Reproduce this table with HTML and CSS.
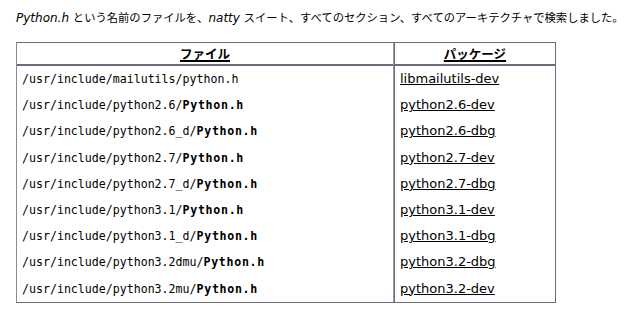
FILE: index.html
```html
<!DOCTYPE html>
<html lang="ja">
<head>
<meta charset="utf-8">
<link rel="stylesheet" href="styles.css">
</head>
<body>
<p class="intro"><i>Python.h</i> <span class="ja">という名前のファイルを、</span><i>natty</i> <span class="ja">スイート、すべてのセクション、すべてのアーキテクチャで検索しました。</span></p>
<table class="results">
  <thead>
    <tr><th class="file-col"><span class="hd">ファイル</span></th><th class="pkg-col"><span class="hd">パッケージ</span></th></tr>
  </thead>
  <tbody>
    <tr><td class="file">/usr/include/mailutils/python.h</td><td class="pkg"><a href="#">libmailutils-dev</a></td></tr>
    <tr><td class="file">/usr/include/python2.6/<b>Python.h</b></td><td class="pkg"><a href="#">python2.6-dev</a></td></tr>
    <tr><td class="file">/usr/include/python2.6_d/<b>Python.h</b></td><td class="pkg"><a href="#">python2.6-dbg</a></td></tr>
    <tr><td class="file">/usr/include/python2.7/<b>Python.h</b></td><td class="pkg"><a href="#">python2.7-dev</a></td></tr>
    <tr><td class="file">/usr/include/python2.7_d/<b>Python.h</b></td><td class="pkg"><a href="#">python2.7-dbg</a></td></tr>
    <tr><td class="file">/usr/include/python3.1/<b>Python.h</b></td><td class="pkg"><a href="#">python3.1-dev</a></td></tr>
    <tr><td class="file">/usr/include/python3.1_d/<b>Python.h</b></td><td class="pkg"><a href="#">python3.1-dbg</a></td></tr>
    <tr><td class="file">/usr/include/python3.2dmu/<b>Python.h</b></td><td class="pkg"><a href="#">python3.2-dbg</a></td></tr>
    <tr><td class="file">/usr/include/python3.2mu/<b>Python.h</b></td><td class="pkg"><a href="#">python3.2-dev</a></td></tr>
  </tbody>
</table>
</body>
</html>
```
FILE: styles.css
```css
html, body {
  margin: 0;
  padding: 0;
  background: #fff;
}
body {
  padding: 9px 16px 0 16px;
  font-family: "DejaVu Sans", "Noto Sans CJK JP", sans-serif;
  font-size: 12px;
  color: #000;
}
.intro {
  margin: 0;
  line-height: 16px;
  white-space: nowrap;
}
.intro .ja {
  font-family: "Noto Sans CJK JP", sans-serif;
  font-size: 11.3px;
}
.results {
  margin-top: 16px;
  border-collapse: separate;
  border-spacing: 0;
  width: 540px;
  border: 1px solid #6b6b7b;
  border-left-color: #8a8a96;
}
.results th {
  font-weight: bold;
  font-family: "Noto Sans CJK JP", sans-serif;
  font-size: 12.5px;
  height: 21px;
  padding: 0;
  text-align: center;
  border-bottom: 2px solid #6b6b7b;
}
.results th .hd {
  text-decoration: underline;
  text-decoration-thickness: 2px;
}
.file-col {
  width: 376px;
  border-right: 1px solid #9a9aa6;
}
.pkg-col {
  border-left: 1px solid #6b6b7b;
}
.results td {
  padding: 5px 5px 5px 5px;
  height: 16.2px;
  line-height: 16px;
  vertical-align: middle;
}
.results td.file {
  font-family: "DejaVu Sans Mono", "Liberation Mono", monospace;
  font-size: 11.6px;
  border-right: 1px solid #9a9aa6;
}
.results td.file b {
  letter-spacing: 0.7px;
}
.results td.pkg {
  border-left: 1px solid #6b6b7b;
  font-size: 13px;
}
.results a {
  color: #000;
  text-decoration: underline;
}
```
